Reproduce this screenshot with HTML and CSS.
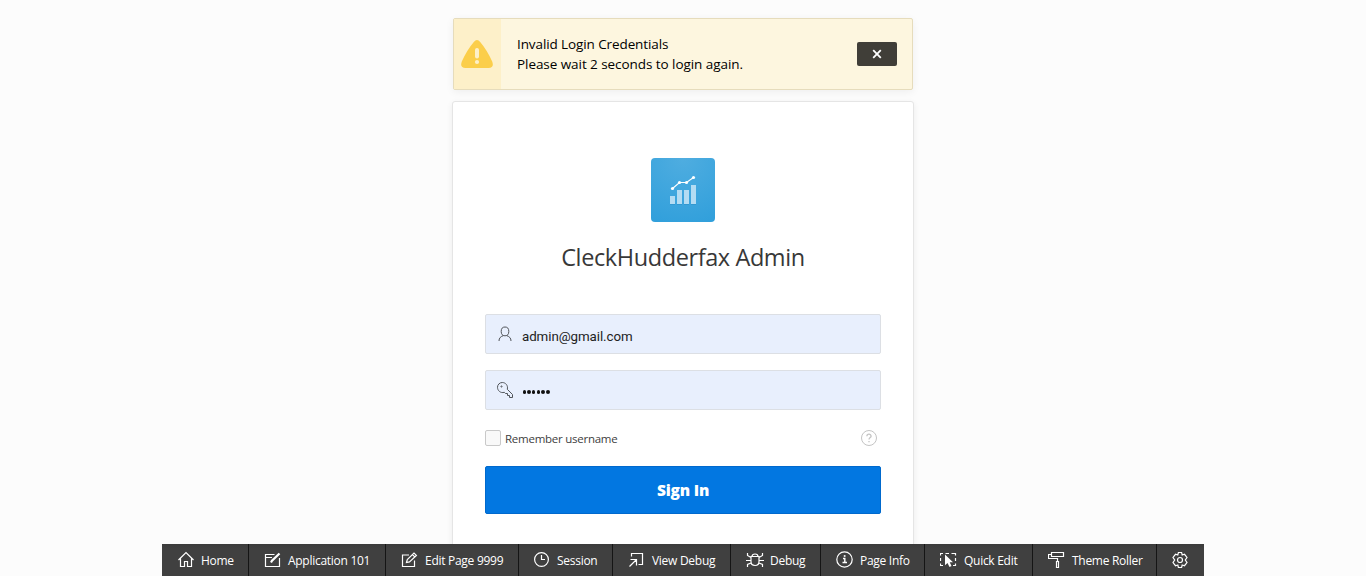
FILE: index.html
```html
<!DOCTYPE html>
<html lang="en">
<head>
<meta charset="utf-8">
<title>CleckHudderfax Admin</title>
<link rel="stylesheet" href="styles.css">
</head>
<body>
<main class="login">
  <section class="alert" role="alert">
    <div class="alert-icon">
      <svg width="32" height="28" viewBox="0 0 32 28"><path d="M12.800 2Q16-1.800 19.200 2Q26 10 31.200 21.500Q33.500 28 27.500 28H4.500Q-1.500 28 .8 21.500Q6 10 12.800 2Z" fill="#fbce4a"/><rect x="14" y="8" width="4" height="10.500" rx="2" fill="#fdf0c9"/><circle cx="16" cy="22" r="2.100" fill="#fdf0c9"/></svg>
    </div>
    <p class="alert-text"><span class="line-a">Invalid Login Credentials</span><br><span class="line-b">Please wait 2 seconds to login again.</span></p>
    <button class="alert-close" aria-label="Close">
      <svg width="10" height="10" viewBox="0 0 10 10"><path d="M1.200 1.200l7.600 7.600M8.800 1.200L1.200 8.800" stroke="#fff" stroke-width="1.800"/></svg>
    </button>
  </section>
  <form class="card">
    <div class="logo">
      <svg width="64" height="64" viewBox="0 0 64 64"><g fill="#b4dcf3"><path d="M19 38h5v8h-5zM26 32h5v14h-5zM33 32h5v14h-5zM40 27h5v19h-5z"/></g><path d="M19 46.500h5M26 46.500h5M33 46.500h5M40 46.500h5" stroke="#2a8cc4" stroke-opacity=".5"/><path d="M21.500 30.500L28.500 24.500H35.500L42.500 19.500" fill="none" stroke="#fff" stroke-width="1.100"/><g fill="#fff"><circle cx="21.500" cy="30.500" r="1.600"/><circle cx="28.500" cy="24.500" r="1.600"/><circle cx="35.500" cy="24.500" r="1.600"/><circle cx="42.500" cy="19.500" r="1.600"/></g></svg>
    </div>
    <h1 class="title">CleckHudderfax Admin</h1>
    <div class="field">
      <svg class="field-icon" width="18" height="18" viewBox="0 0 18 18"><ellipse cx="9" cy="6.400" rx="3.800" ry="4.400"/><path d="M3 16c0-3 1.500-4.300 4.500-5.500M15 16c0-3-1.500-4.300-4.500-5.500"/></svg>
      <span class="field-text">admin@gmail.com</span>
    </div>
    <div class="field">
      <svg class="field-icon" width="18" height="18" viewBox="0 0 18 18"><path d="M8.300 11.300C4.500 12.500 1.500 9.500 1.500 6.300A4.800 4.800 0 0 1 6.300 1.500C9.500 1.500 12.300 4.500 11.300 8.300L16.500 13.500V16.500H13.500V14.500H11.500V12.500H9.500Z"/><circle cx="5.500" cy="5.500" r=".6"/></svg>
      <span class="dots"><i></i><i></i><i></i><i></i><i></i><i></i></span>
    </div>
    <div class="options">
      <span class="checkbox"></span><span class="remember">Remember username</span>
      <svg class="help" width="16" height="16" viewBox="0 0 16 16"><circle cx="8" cy="8" r="7.500"/><path d="M5.900 6.300C5.900 3.500 10.100 3.500 10.100 6.200C10.100 7.500 8 7.700 8 9.500M8 10.900v1.400" stroke-width="1.300"/></svg>
    </div>
    <button class="signin" type="button"><span>Sign In</span></button>
  </form>
</main>
<nav class="toolbar">
  <a class="tool home"><svg width="18" height="18" viewBox="0 0 18 18"><path d="M1.500 9L9 1.500L16.500 9M3.500 7.500V15.500H7.500V10.500H10.500V15.500H14.500V7.500"/></svg><span>Home</span></a>
  <a class="tool application"><svg width="18" height="18" viewBox="0 0 18 18"><path d="M10.500 3.500H1.500V15.500H15.500V7M1.500 6.500H8"/><path d="M15.500 2.500L8 9.800L7 11.500" stroke-width="2.200"/></svg><span>Application 101</span></a>
  <a class="tool edit"><svg width="18" height="18" viewBox="0 0 18 18"><path d="M8 4H1.500V15.500H13.500V9.500M5.500 11.500L6.300 8.500L13 2L15.400 4.400L8.500 10.900ZM11.400 3.500L13.800 5.900"/></svg><span>Edit Page 9999</span></a>
  <a class="tool session"><svg width="18" height="18" viewBox="0 0 18 18"><circle cx="7.500" cy="8.500" r="6.900"/><path d="M7.500 4V8.500H11"/></svg><span>Session</span></a>
  <a class="tool view"><svg width="18" height="18" viewBox="0 0 18 18"><path d="M3.500 5.500V2.500H14.500V13.500H10.500M1.500 15.500L8 9M2.500 8.500H8.500V14.500"/></svg><span>View Debug</span></a>
  <a class="tool debug"><svg width="18" height="18" viewBox="0 0 18 18"><path d="M5 5.500H13V10.500Q13 14.500 9 14.500Q5 14.500 5 10.500ZM6 5.500Q6 3 9 3Q12 3 12 5.500M1.500 2V4.500L5 6.500M16.500 2V4.500L13 6.500M0 9.500H5M13 9.500H18M5 12L1.500 13.500V16M13 12L16.500 13.500V16"/></svg><span>Debug</span></a>
  <a class="tool info"><svg width="18" height="18" viewBox="0 0 18 18"><circle cx="8.500" cy="8.500" r="7.700"/><path d="M7 7.500H8.800V11.500M6.500 11.500H11" stroke-width="1.400"/><path d="M7.800 5H9.500" stroke-width="1.700"/></svg><span>Page Info</span></a>
  <a class="tool quick"><svg width="18" height="18" viewBox="0 0 18 18"><path d="M.5 4.500V2.500H3M5.500 2.500H9M11.500 2.500H15.500V4.500M.5 7V10M.5 12.500V14.500H3M15.500 7V10M15.500 12.500V14.500H13"/><path d="M5 3.500V14.200L7.500 12L9.500 16L11.500 15L9.700 11.300H13Z" fill="#fff" stroke="none"/></svg><span>Quick Edit</span></a>
  <a class="tool theme"><svg width="18" height="18" viewBox="0 0 18 18"><path d="M3.500 1.500H15.500V5.500H3.500ZM3.500 3.500H.5V7.500H9.500V10.500M8.500 10.500H10.500V16.500H8.500Z"/></svg><span>Theme Roller</span></a>
  <a class="tool settings" aria-label="Settings"><svg width="18" height="18" viewBox="0 0 18 18"><path d="M7.400 1.500H10.600L11.200 4L13.500 3.300L16 6.500L14.300 9L16 11.500L13.500 14.700L11.200 14L10.600 16.500H7.400L6.800 14L4.500 14.700L2 11.500L3.700 9L2 6.500L4.500 3.300L6.800 4Z"/><circle cx="9" cy="9" r="2.500"/></svg></a>
</nav>
</body>
</html>
```
FILE: styles.css
```css
* { box-sizing: border-box; }
body {
  margin: 0;
  height: 576px;
  overflow: hidden;
  background: #fcfcfc;
  font-family: "Open Sans", "Noto Sans", sans-serif;
  display: flex;
  flex-direction: column;
  align-items: center;
}
button { border: 0; padding: 0; font-family: inherit; }
.login {
  height: 544px;
  flex: none;
  padding-top: 18px;
  display: flex;
  flex-direction: column;
  align-items: center;
  gap: 11px;
}
.alert {
  width: 460px;
  height: 72px;
  flex: none;
  display: flex;
  align-items: center;
  border: 1px solid #e6dcbc;
  border-radius: 2px;
  background: #fdf6df;
  box-shadow: 0 2px 8px rgba(0, 0, 0, .06);
  padding-right: 15px;
}
.alert-icon {
  width: 47px;
  height: 70px;
  padding-right: 1px;
  background: #fdf0c9;
  display: flex;
  align-items: center;
  justify-content: center;
}
.alert-text {
  flex: 1;
  margin: 0 0 0 16px;
  font-size: 13.5px;
  line-height: 20px;
  color: #000;
  white-space: nowrap;
}
.line-a { letter-spacing: -.1px; }
.line-b { letter-spacing: -.06px; }
.alert-close {
  width: 40px;
  height: 24px;
  border-radius: 2px;
  background: #403e38;
  display: flex;
  align-items: center;
  justify-content: center;
}
.card {
  width: 462px;
  height: 500px;
  flex: none;
  display: flex;
  flex-direction: column;
  align-items: center;
  border: 1px solid #e5e5e5;
  border-radius: 3px;
  background: #fff;
  box-shadow: 0 2px 6px rgba(0, 0, 0, .07);
  padding-top: 56px;
}
.logo {
  width: 64px;
  height: 64px;
  border-radius: 4px;
  overflow: hidden;
  background: radial-gradient(circle at 50% 0, #4fade0, #309fdb);
}
.logo svg { display: block; }
.title {
  margin: 19px 0 41px;
  font-size: 23.5px;
  line-height: 32px;
  font-weight: 400;
  letter-spacing: -.4px;
  color: #383838;
  white-space: nowrap;
}
.field {
  width: 396px;
  height: 40px;
  margin-bottom: 16px;
  border: 1px solid #dcdfe4;
  border-radius: 2px;
  background: #e8effd;
  display: flex;
  align-items: center;
  padding-left: 10px;
}
.field-icon, .help { fill: none; stroke: #505459; stroke-width: 1; }
.field-text {
  margin: 6px 0 0 8px;
  font-family: Roboto, sans-serif;
  font-size: 13.333px;
  line-height: 16px;
  letter-spacing: -.08px;
  color: #222;
}
.dots { display: flex; gap: 1.1px; margin: 4px 0 0 8.5px; }
.dots i { width: 3.6px; height: 4px; border-radius: 2px; background: #111; }
.options {
  width: 396px;
  height: 24px;
  display: flex;
  align-items: center;
  margin-bottom: 16px;
  padding-right: 4px;
}
.checkbox {
  width: 16px;
  height: 16px;
  border: 1px solid #c9c9c9;
  border-radius: 2px;
  background: #f9f9f9;
}
.remember {
  margin-left: 4px;
  padding-top: 2px;
  font-size: 11.5px;
  line-height: 16px;
  letter-spacing: -.25px;
  color: #404040;
}
.help { margin-left: auto; stroke: #c4c4c4; }
.signin {
  width: 396px;
  height: 48px;
  border: 1px solid #0069cd;
  border-radius: 2px;
  background: #0277e1;
  color: #fff;
  font-size: 15.5px;
  line-height: 24px;
  font-weight: 800;
}
.signin span { letter-spacing: -.2px; }
.toolbar {
  position: relative;
  z-index: 1;
  flex: none;
  width: 1042px;
  height: 32px;
  display: flex;
  background: linear-gradient(#3b3b3b, #404040 5px);
  color: #fff;
  font-size: 12px;
  line-height: 16px;
}
.tool {
  flex: none;
  display: flex;
  align-items: center;
  gap: 6px;
  padding-left: 15px;
  border-right: 1px solid #151515;
  white-space: nowrap;
}
.tool svg { flex: none; fill: none; stroke: #fff; stroke-width: 1.2; }
.tool span { padding-top: 1px; letter-spacing: -.28px; }
.home { width: 87px; }
.application { width: 137px; }
.edit { width: 133px; }
.session { width: 94px; gap: 5px; }
.view { width: 118px; }
.debug { width: 90px; }
.info { width: 104px; }
.quick { width: 108px; }
.theme { width: 124px; }
.settings { width: 47px; border: 0; padding-left: 14px; }
```
